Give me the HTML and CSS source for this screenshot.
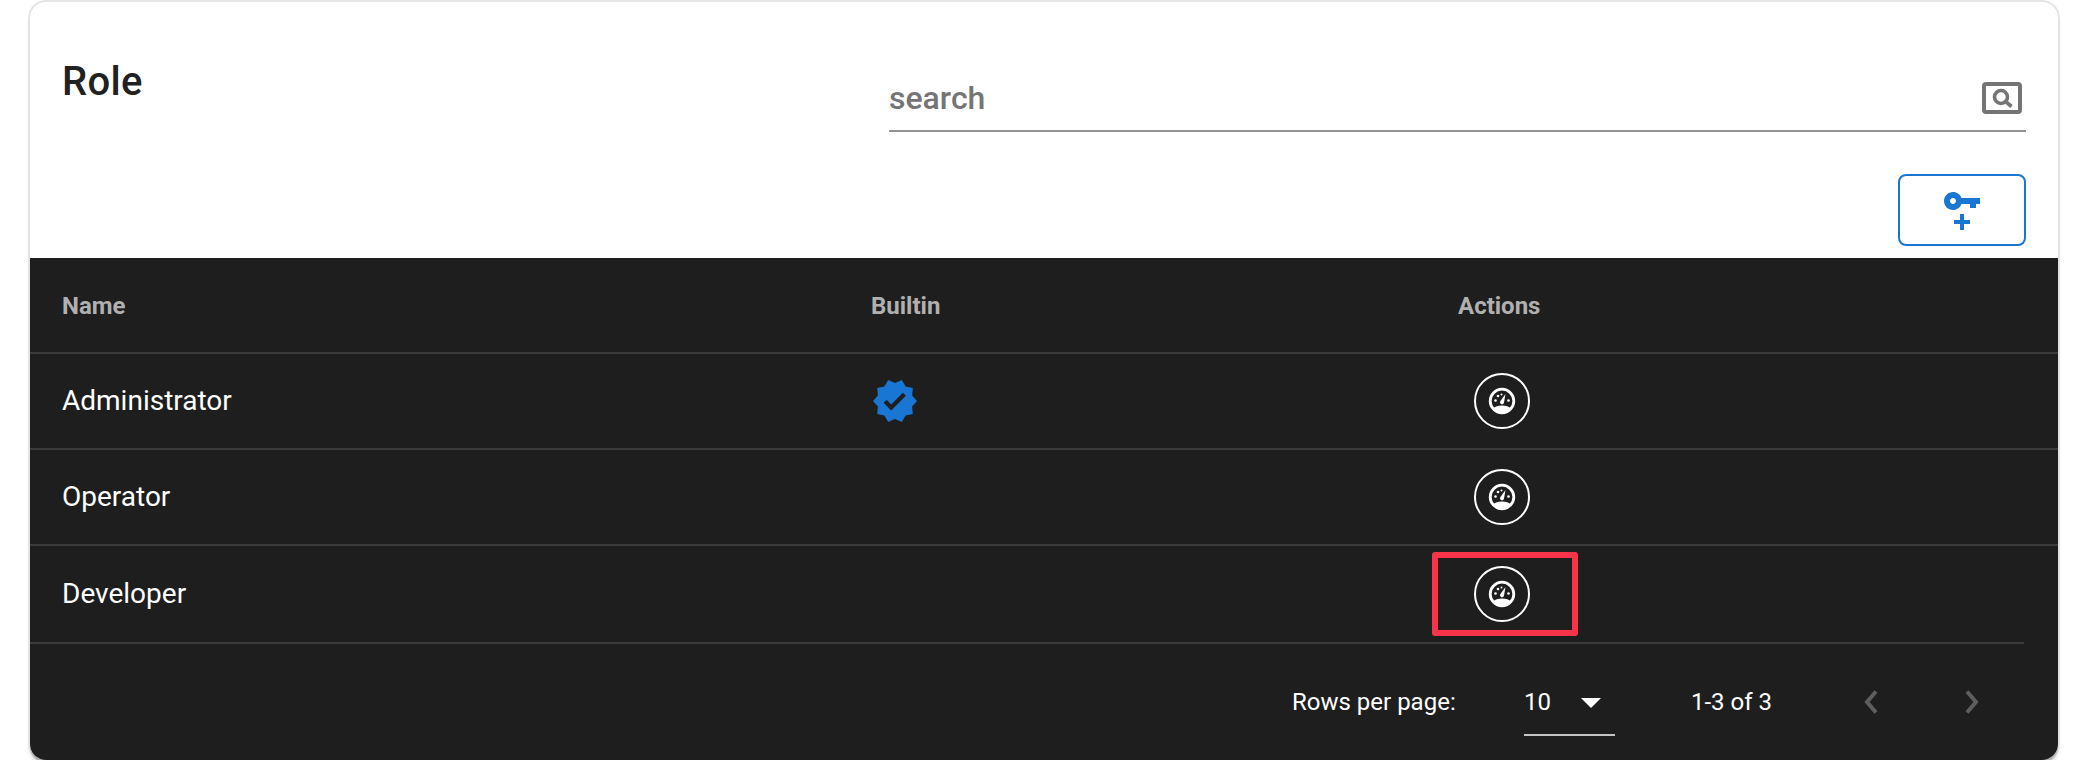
FILE: index.html
```html
<!DOCTYPE html>
<html lang="en">
<head>
<meta charset="utf-8">
<title>Role</title>
<link rel="stylesheet" href="styles.css">
</head>
<body>
<main class="card">
  <header class="toolbar">
    <h1 class="title">Role</h1>
    <div class="tools">
      <div class="search">
        <span class="search-text">search</span>
        <svg class="search-icon" viewBox="0 0 40 32"><rect x="2" y="2" width="36" height="28" rx="2" fill="none" stroke="#757575" stroke-width="4"/><circle cx="19" cy="15" r="6.500" fill="none" stroke="#757575" stroke-width="3.600"/><path d="M23.500 19.500l6 5" stroke="#757575" stroke-width="3.600" fill="none"/></svg>
      </div>
      <button class="add-btn" type="button">
        <svg class="key-icon" viewBox="0 0 24 24"><path fill="#1976d2" transform="translate(1 0)" d="M6.500 3C8.460 3 10.130 4.250 10.740 6H20V9H18V11H15V9H10.740C10.130 10.750 8.460 12 6.500 12C4 12 2 10 2 7.500C2 5 4 3 6.500 3M6.500 6C5.670 6 5 6.670 5 7.500C5 8.330 5.670 9 6.500 9C7.330 9 8 8.330 8 7.500C8 6.670 7.330 6 6.500 6Z"/><path fill="#1976d2" d="M8 17H11V14H13V17H16V19H13V22H11V19H8V17Z"/></svg>
      </button>
    </div>
  </header>
  <section class="table">
    <div class="row head">
      <div class="cell">Name</div>
      <div class="cell">Builtin</div>
      <div class="cell">Actions</div>
    </div>
    <div class="row">
      <div class="cell"><span class="label">Administrator</span></div>
      <div class="cell"><svg class="verified" viewBox="0 0 24 24"><path fill="#1976d2" d="M23 12l-2.440-2.790.34-3.690-3.610-.82-1.890-3.200L12 2.960 8.600 1.500 6.710 4.690 3.100 5.500l.34 3.700L1 12l2.440 2.790-.34 3.700 3.610.82L8.600 22.500l3.400-1.470 3.400 1.460 1.890-3.190 3.610-.82-.34-3.690L23 12zm-12.910 4.720l-3.800-3.810 1.480-1.480 2.320 2.330 5.850-5.870 1.480 1.480-7.330 7.350z"/></svg></div>
      <div class="cell"><button class="action" type="button"><svg class="gauge" viewBox="0 0 28 28"><use href="#gauge-shape"/></svg></button></div>
    </div>
    <div class="row">
      <div class="cell"><span class="label">Operator</span></div>
      <div class="cell"></div>
      <div class="cell"><button class="action" type="button"><svg class="gauge" viewBox="0 0 28 28"><use href="#gauge-shape"/></svg></button></div>
    </div>
    <div class="row last">
      <div class="cell"><span class="label">Developer</span></div>
      <div class="cell"></div>
      <div class="cell"><button class="action" type="button"><svg class="gauge" viewBox="0 0 28 28"><use href="#gauge-shape"/></svg></button><span class="highlight"></span></div>
    </div>
    <footer class="pager">
      <span class="pager-label">Rows per page:</span>
      <div class="select"><span>10</span><svg class="caret" viewBox="0 0 20 10"><path fill="#fff" d="M0 0H20L10 10Z"/></svg></div>
      <span class="range">1-3 of 3</span>
      <svg class="chev" viewBox="0 0 14 24"><path d="M12 1.500 3 12l9 10.500" fill="none" stroke="#5e5e5e" stroke-width="4"/></svg>
      <svg class="chev next" viewBox="0 0 14 24"><path d="M2 1.500 11 12 2 22.500" fill="none" stroke="#5e5e5e" stroke-width="4"/></svg>
    </footer>
  </section>
</main>
<svg class="defs" width="0" height="0" aria-hidden="true">
  <symbol id="gauge-shape" viewBox="0 0 28 28">
    <circle cx="14" cy="14" r="11.800" fill="none" stroke="#fff" stroke-width="2.800"/>
    <path fill="#fff" d="M5 21.500C7 19.500 10 18.500 14 18.500s7 1 9 3C21 24.500 17.500 25.500 14 25.500s-7-1-9-4Z"/>
    <path fill="#fff" d="M17.500 7 16 15.500a2 2 0 1 1-3.600-1.400Z"/>
    <circle cx="7.500" cy="13.500" r="1.300" fill="#fff"/><circle cx="10" cy="9" r="1.300" fill="#fff"/><circle cx="13.500" cy="7.500" r="1" fill="#fff"/><circle cx="20.500" cy="13.500" r="1.300" fill="#fff"/>
  </symbol>
</svg>
</body>
</html>
```
FILE: styles.css
```css
* { box-sizing: border-box; }
html, body { margin: 0; background: #fff; }
body { padding: 2px 16px 0 30px; font-family: Roboto, "Liberation Sans", sans-serif; overflow: hidden; }
.defs { position: absolute; }
.card {
  height: 758px;
  border-radius: 16px;
  overflow: hidden;
  background: #fff;
  display: flex;
  flex-direction: column;
  box-shadow: 0 3px 1px 0 #b4b4b4, 0 0 0 2px #e6e6e6, 0 5px 4px rgba(0,0,0,.16);
}
.toolbar { height: 256px; display: flex; justify-content: space-between; padding: 0 32px; }
.title { margin: 56px 0 0; font-size: 40px; line-height: 48px; font-weight: 500; letter-spacing: .3px; color: #212121; }
.tools { width: 1137px; display: flex; flex-direction: column; align-items: flex-end; }
.search { padding: 70px 4px 0 0; border-bottom: 2px solid #949494; display: flex; justify-content: space-between; align-items: flex-start; box-sizing: content-box; height: 58px; width: 1133px; }
.search-text { font-size: 32px; line-height: 56px; height: 56px; margin-top: -2px; font-weight: 500; color: #757575; }
.search-icon { width: 40px; height: 32px; margin-top: 10px; }
.add-btn { margin-top: 42px; width: 128px; height: 72px; border: 2px solid #1976d2; border-radius: 8px; background: #fff; padding: 0; display: flex; align-items: center; justify-content: center; }
.key-icon { width: 48px; height: 48px; }
.table { flex: 1; background: #1e1e1e; color: #fff; display: flex; flex-direction: column; }
.row { display: grid; grid-template-columns: 809px 587px 1fr; height: 96px; border-bottom: 2px solid #3a3a3a; font-size: 28px; }
.row.last { height: 98px; margin-right: 34px; }
.cell { display: flex; align-items: center; padding-left: 32px; position: relative; }
.label { margin-top: -2px; }
.head { font-size: 24px; font-weight: 700; color: #b0b0b0; padding-top: 1px; }
.verified { width: 48px; height: 48px; }
.action { width: 56px; height: 56px; margin-left: 16px; border: 2px solid #fff; border-radius: 50%; background: none; padding: 0; display: flex; align-items: center; justify-content: center; }
.gauge { width: 28px; height: 28px; }
.highlight { position: absolute; left: 6px; top: 6px; width: 146px; height: 84px; border: 6px solid #f93448; border-radius: 3px; }
.pager { flex: 1; display: flex; align-items: flex-start; font-size: 24px; padding-left: 1262px; }
.pager-label { width: 232px; margin-top: 44px; line-height: 28px; }
.select { width: 91px; height: 62px; margin-top: 30px; padding-top: 14px; line-height: 28px; border-bottom: 2px solid #c4c4c4; display: flex; justify-content: space-between; align-items: flex-start; padding-right: 14px; }
.caret { width: 20px; height: 10px; margin-top: 10px; }
.range { margin: 44px 0 0 76px; line-height: 28px; width: 94px; }
.chev { width: 14px; height: 24px; margin: 46px 0 0 79px; }
.chev.next { margin-left: 87px; }
```
